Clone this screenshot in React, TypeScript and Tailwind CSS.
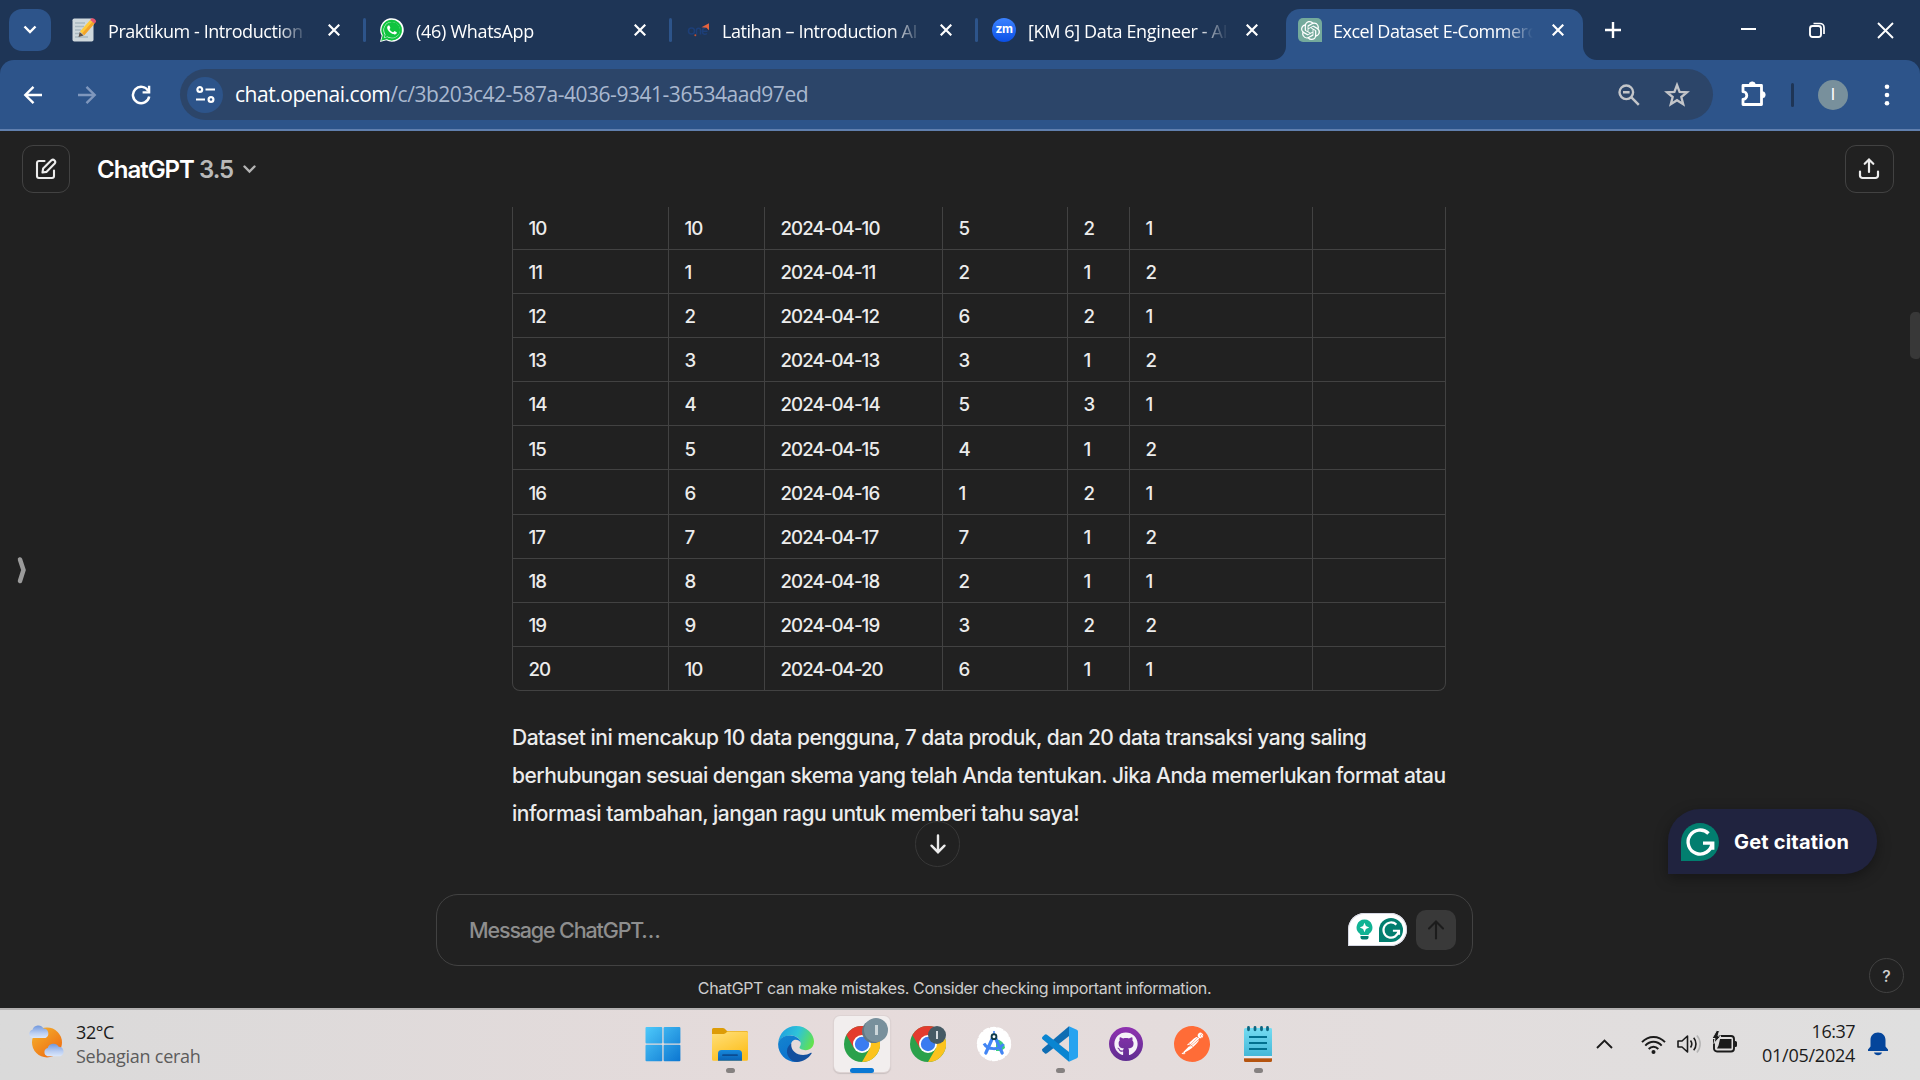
import type { ReactNode } from "react";
import { FaWhatsapp, FaGithub } from "react-icons/fa";
import { SiOpenai, SiPostman } from "react-icons/si";

const tabFont = "font-['Open_Sans','Noto_Sans',sans-serif]";
const chatFont = "font-['Inter','Liberation_Sans',sans-serif]";

/* ---------- small icons ---------- */

function MemoIcon() {
  return (
    <svg width="26" height="24" viewBox="0 0 26 24">
      <rect x="0.5" y="0.5" width="21" height="23" rx="1.8" fill="#cfd8dc" />
      <path d="M3 5h10M3 8.5h9M3 12h6M3 15.5h4M3 19h13" stroke="#a9b8c0" strokeWidth="1.3" />
      <path d="M6.5 19l1.2-5 4 3.4z" fill="#5f5048" />
      <path d="M8 13.4L18.2 1.9l4.3 3.7L12.2 17.2z" fill="#ffca3a" />
      <path d="M10.2 15.3L20.4 3.8l2.1 1.8L12.2 17.2z" fill="#f2a32c" />
      <path d="M18.2 1.9l1.5-1.6c1.7-.8 4.700 1.400 4.300 3.600l-1.500 1.700z" fill="#e5566d" />
    </svg>
  );
}

function WhatsAppIcon() {
  return (
    <span className="relative flex size-6 items-center justify-center">
      <svg width="24" height="24" viewBox="0 0 24 24">
        <path d="M0 24l1.700-6.200A11.800 11.800 0 1 1 6.300 22.300z" fill="#fff" />
        <path d="M2.100 21.900l1.200-4.500a10 10 0 1 1 3.500 3.400z" fill="#10c43f" />
      </svg>
      <FaWhatsapp className="absolute left-[1px] top-[1px] size-[22px] text-white" />
      <svg className="absolute left-0 top-0" width="24" height="24" viewBox="0 0 24 24">
        <path d="M2.600 21.400l1.200-4.500a9.200 9.200 0 1 1 3.300 3.200z" fill="none" stroke="#10c43f" strokeWidth="2" />
      </svg>
    </span>
  );
}

function OneIcon() {
  return (
    <svg width="24" height="24" viewBox="0 0 24 24">
      <g fill="none" stroke="#1d3f78" strokeWidth="1.500">
        <circle cx="5.500" cy="13" r="3" />
        <path d="M10.500 16.500V12c0-2.500 4-2.500 4 0v4.500M16.500 13.200h5M21 15.500c-2 1.500-4.600.8-4.600-2.300 0-2.300 1.600-3.200 3-3.200" />
      </g>
      <path d="M15.500 9.300L23 5.200v7l-2.500-2.500z" fill="#e5623d" />
      <circle cx="9.300" cy="17.200" r="1" fill="#c6502f" />
    </svg>
  );
}

function ZoomIcon() {
  return (
    <span className="flex size-6 items-center justify-center rounded-full bg-linear-to-b from-[#3b82ff] to-[#0a4fe6] pb-[2px] font-['Inter',sans-serif] text-[12px] font-bold leading-none tracking-tight text-white">
      zm
    </span>
  );
}

function GptIcon() {
  return (
    <span className="flex size-6 items-center justify-center rounded-tl-[5px] rounded-tr-[5px] rounded-bl-[5px] bg-[#74aa9c]">
      <SiOpenai className="size-[19px] text-white" />
    </span>
  );
}

function CloseX() {
  return (
    <svg width="12" height="12" viewBox="0 0 12 12">
      <path d="M0.7 0.7l10.6 10.6M11.300 0.700L0.700 11.300" stroke="#fff" strokeWidth="2.200" />
    </svg>
  );
}

function GrammarlyMark({ size }: { size: number }) {
  return (
    <svg width={size} height={size} viewBox="0 0 38 38">
      <path d="M19 0a19 19 0 0 1 0 38H0V19A19 19 0 0 1 19 0z" fill="#027e6f" />
      <path d="M27.500 10.500A12 12 0 1 0 31 20.500" fill="none" stroke="#fff" strokeWidth="3.400" />
      <path d="M22 20.200h9.800v6.500" fill="none" stroke="#fff" strokeWidth="3.200" />
    </svg>
  );
}

/* ---------- browser chrome ---------- */

function TabTitle({ children, className }: { children: ReactNode; className: string }) {
  return (
    <div
      className={`mt-[2px] w-[202px] overflow-hidden whitespace-nowrap text-[18px] leading-[26px] text-white [mask-image:linear-gradient(to_right,black_84%,transparent_99%)] ${tabFont} ${className}`}
    >
      {children}
    </div>
  );
}

function Tab({
  icon,
  title,
  tracking,
  separator,
  first,
}: {
  icon: ReactNode;
  title: string;
  tracking: string;
  separator?: boolean;
  first?: boolean;
}) {
  return (
    <div className="flex h-[60px] w-[306px] shrink-0 items-center">
      <div className={first ? "ml-3 w-[26px]" : "ml-[14px] w-6"}>{icon}</div>
      <TabTitle className={`${first ? "ml-[10px]" : "ml-3"} ${tracking}`}>{title}</TabTitle>
      <div className={`flex w-3 justify-center ${first ? "ml-[18px]" : "ml-[16px]"}`}>
        <CloseX />
      </div>
      <div className="grow" />
      {separator && <div className="h-6 w-[3px] rounded-full bg-[#2d548a]" />}
    </div>
  );
}

function TabStrip() {
  return (
    <div className="flex h-[60px] bg-[#1e3556]">
      <div className="ml-[9px] mt-[9px] flex size-[42px] items-center justify-center rounded-[13px] bg-[#2d548a]">
        <svg width="14" height="10" viewBox="0 0 14 10">
          <path d="M1.500 1.500L7 7l5.500-5.500" fill="none" stroke="#fff" strokeWidth="2.400" />
        </svg>
      </div>
      <div className="w-[9px]" />
      <Tab first separator icon={<MemoIcon />} title="Praktikum - Introduction AI" tracking="tracking-[-0.44px]" />
      <Tab separator icon={<WhatsAppIcon />} title="(46) WhatsApp" tracking="tracking-[-0.3px]" />
      <Tab separator icon={<OneIcon />} title="Latihan – Introduction AI for" tracking="tracking-[-0.44px]" />
      <Tab icon={<ZoomIcon />} title="[KM 6] Data Engineer - AI for" tracking="tracking-[-0.36px]" />
      <div className="relative ml-[2px] flex w-[297px] shrink-0 flex-col pt-[9px]">
        <div className="flex h-[51px] w-[297px] items-center rounded-t-[14px] bg-[#2d548a] pb-[9px]">
          <div className="ml-[12px]">
            <GptIcon />
          </div>
          <TabTitle className="ml-[11px] tracking-[-0.5px]">Excel Dataset E-Commerce</TabTitle>
          <div className="ml-[17px] flex w-3 justify-center">
            <CloseX />
          </div>
        </div>
        <svg className="absolute -left-[14px] bottom-0" width="14" height="14" viewBox="0 0 14 14">
          <path d="M14 0v14H0A14 14 0 0 0 14 0z" fill="#2d548a" />
        </svg>
        <svg className="absolute -right-[14px] bottom-0" width="14" height="14" viewBox="0 0 14 14">
          <path d="M0 0v14h14A14 14 0 0 1 0 0z" fill="#2d548a" />
        </svg>
      </div>
      <div className="flex grow items-center">
        <svg className="ml-[22px]" width="16" height="16" viewBox="0 0 16 16">
          <path d="M8 0v16M0 8h16" stroke="#fff" strokeWidth="2.400" />
        </svg>
        <svg className="ml-[120px]" width="15" height="16" viewBox="0 0 15 16">
          <path d="M0 7h15" stroke="#fff" strokeWidth="2" />
        </svg>
        <svg className="ml-[53px]" width="16" height="16" viewBox="0 0 16 16">
          <rect x="1" y="4" width="11" height="11" rx="2.500" fill="none" stroke="#fff" strokeWidth="1.900" />
          <path d="M4.500 1.500H11A4 4 0 0 1 15 5.500V12" fill="none" stroke="#fff" strokeWidth="1.700" />
        </svg>
        <svg className="ml-[52px]" width="17" height="17" viewBox="0 0 17 17">
          <path d="M1 1l15 15M16 1L1 16" stroke="#fff" strokeWidth="1.900" />
        </svg>
      </div>
    </div>
  );
}

function Toolbar() {
  return (
    <div className="bg-[#1e3556]">
      <div className="flex h-[71px] items-center rounded-t-[14px] border-b-2 border-[#607fae] bg-[#2d548a]">
        <svg className="ml-[23px]" width="20" height="20" viewBox="0 0 20 20">
          <path d="M19 10H2.500M10.500 1.800L2.300 10l8.200 8.200" fill="none" stroke="#fff" strokeWidth="2.400" />
        </svg>
        <svg className="ml-[34px]" width="20" height="20" viewBox="0 0 20 20">
          <path d="M1 10h16.500M9.500 1.800l8.200 8.200-8.200 8.200" fill="none" stroke="#7f97bd" strokeWidth="2.400" />
        </svg>
        <svg className="ml-[34px]" width="20" height="20" viewBox="0 0 20 20">
          <path d="M17.300 6A8.200 8.200 0 1 0 18.200 11.500" fill="none" stroke="#fff" strokeWidth="2.500" />
          <path d="M19.300 0.800v7.700h-7.700V6.200h5.300V0.800z" fill="#fff" />
        </svg>
        <div className="ml-[29px] flex h-[51px] w-[1533px] items-center rounded-full bg-[#2c4569]">
          <div className="ml-[7px] flex size-9 items-center justify-center rounded-full bg-[#2d548a]">
            <svg width="19" height="17" viewBox="0 0 19 17">
              <g fill="none" stroke="#fff" strokeWidth="2.200">
                <circle cx="3.800" cy="3.500" r="2.400" />
                <path d="M9.500 3.500H19M0 13.500h9" />
                <circle cx="15" cy="13.500" r="2.400" />
              </g>
            </svg>
          </div>
          <div className={`ml-[12px] whitespace-nowrap text-[21px] leading-none tracking-[-0.47px] text-[#a9b8cf] ${tabFont}`}>
            <span className="text-white">chat.openai.com</span>/c/3b203c42-587a-4036-9341-36534aad97ed
          </div>
          <div className="grow" />
          <svg width="22" height="22" viewBox="0 0 22 22">
            <circle cx="8.300" cy="8.300" r="6.800" fill="none" stroke="#c3c5c9" strokeWidth="2.400" />
            <path d="M5 8.300h6.600M13.200 13.200l7.600 7.600" stroke="#c3c5c9" strokeWidth="2.500" />
          </svg>
          <svg className="ml-[24px] mr-[23px]" width="26" height="25" viewBox="0 0 26 25">
            <path
              d="M13 3l2.600 6.800 7.400.5-5.700 4.700 1.900 7.200L13 18.200l-6.200 4 1.900-7.200L3 10.300l7.400-.5z"
              fill="none"
              stroke="#c3c5c9"
              strokeWidth="2.300"
            />
          </svg>
        </div>
        <svg className="mb-[2px] ml-[26px]" width="28" height="28" viewBox="0 0 28 28">
          <path
            d="M4 5.500H22.500V24.500H4V19.300a3.600 3.600 0 0 0 0-7.600z"
            fill="none"
            stroke="#fff"
            strokeWidth="2.800"
            strokeLinejoin="round"
          />
          <path d="M10 5a3.200 3.200 0 0 1 6.400 0zM23 11.500a3.300 3.300 0 0 1 0 6.600z" fill="#fff" stroke="#fff" strokeWidth="0.600" />
        </svg>
        <div className="ml-[24px] h-6 w-[3px] rounded-full bg-[#1e3556]" />
        <div className="ml-[24px] flex size-[30px] items-center justify-center rounded-full bg-[#78909c] font-['Roboto',sans-serif] text-[16px] leading-none text-white">
          I
        </div>
        <svg className="ml-[36px]" width="6" height="22" viewBox="0 0 6 22">
          <g fill="#fff">
            <circle cx="3" cy="2.700" r="2.300" />
            <circle cx="3" cy="11" r="2.300" />
            <circle cx="3" cy="19.300" r="2.300" />
          </g>
        </svg>
      </div>
    </div>
  );
}

/* ---------- chat page ---------- */

const rows: string[][] = [
  ["10", "10", "2024-04-10", "5", "2", "1", ""],
  ["11", "1", "2024-04-11", "2", "1", "2", ""],
  ["12", "2", "2024-04-12", "6", "2", "1", ""],
  ["13", "3", "2024-04-13", "3", "1", "2", ""],
  ["14", "4", "2024-04-14", "5", "3", "1", ""],
  ["15", "5", "2024-04-15", "4", "1", "2", ""],
  ["16", "6", "2024-04-16", "1", "2", "1", ""],
  ["17", "7", "2024-04-17", "7", "1", "2", ""],
  ["18", "8", "2024-04-18", "2", "1", "1", ""],
  ["19", "9", "2024-04-19", "3", "2", "2", ""],
  ["20", "10", "2024-04-20", "6", "1", "1", ""],
];

function DataTable() {
  return (
    <div className="w-[934px] overflow-hidden rounded-b-[8px] border-b border-l border-r border-[#424242]">
      {rows.map((row, r) => (
        <div
          key={row[0]}
          className={`grid grid-cols-[156px_96px_178px_125px_62px_183px_1fr] ${
            r === 0 ? "h-[42px]" : "h-[44.1px] border-t border-[#424242]"
          }`}
        >
          {row.map((cell, c) => (
            <div
              key={c}
              className={`flex items-center pl-[15.500px] text-[18.700px] font-medium leading-none tracking-[-0.950px] text-[#ececec] ${
                r === 0 ? "pt-[2px]" : "pt-[4px]"
              } ${c < 6 ? "border-r border-[#424242]" : ""}`}
            >
              {cell}
            </div>
          ))}
        </div>
      ))}
    </div>
  );
}

function ChatHeader() {
  return (
    <div className="flex h-[76px] shrink-0 items-center pb-px pl-[22px] pr-[26px]">
      <div className="flex size-[48px] items-center justify-center rounded-[11px] border border-[#424242]">
        <svg width="24" height="24" viewBox="0 0 24 24" fill="none" stroke="#ececec" strokeWidth="2.100">
          <path d="M10.500 4H5A2 2 0 0 0 3 6v13a2 2 0 0 0 2 2h13a2 2 0 0 0 2-2v-5.500" strokeLinecap="round" />
          <path d="M8.500 15.500l.6-3.900 8.300-8.300a2.350 2.350 0 0 1 3.300 3.300l-8.300 8.300z" strokeLinejoin="round" />
        </svg>
      </div>
      <div className="ml-[27px] flex items-center pt-[3px] text-[24px] font-semibold leading-none tracking-[-1px] text-white">
        <span>ChatGPT</span>
        <span className="ml-[5px] text-[#b9b9b9]">3.5</span>
      </div>
      <svg className="ml-[10px] mt-px" width="13" height="9" viewBox="0 0 13 9">
        <path d="M1.500 1.500l5 5 5-5" fill="none" stroke="#b4b4b4" strokeWidth="2.400" strokeLinecap="round" />
      </svg>
      <div className="grow" />
      <div className="flex h-[48px] w-[49px] items-center justify-center rounded-[11px] border border-[#424242] pr-px">
        <svg width="22" height="24" viewBox="0 0 22 24" fill="none" stroke="#ececec" strokeWidth="2.200" strokeLinecap="round">
          <path d="M11 15V3M6.700 6.800L11 2.500l4.300 4.300" />
          <path d="M2 14.500v4a2.500 2.500 0 0 0 2.500 2.500h13a2.500 2.500 0 0 0 2.500-2.500v-4" />
        </svg>
      </div>
    </div>
  );
}

function Composer() {
  return (
    <div className="ml-[436px] flex h-[72px] w-[1037px] shrink-0 items-center rounded-[22px] border border-[#424242] pb-px">
      <div className="ml-[32px] pt-[3px] text-[21.500px] font-medium leading-none tracking-[-1.150px] text-[#8e8e8e]">Message ChatGPT…</div>
      <div className="grow" />
      <div className="flex h-[33px] w-[59px] items-center rounded-t-full rounded-br-full bg-white pl-[8px] shadow-[inset_0_0_0_1px_#d5d7e2]">
        <svg width="17" height="21" viewBox="0 0 17 21">
          <path d="M8.500 0.500a7.900 7.900 0 0 1 4.600 14.300L12.500 16h-8l-.6-1.200A7.900 7.900 0 0 1 8.500.5z" fill="#11b394" />
          <path d="M4.500 17h8v1.500a2 2 0 0 1-2 2h-4a2 2 0 0 1-2-2z" fill="#027e6f" />
          <path d="M8.500 3.800l1.400 3.300 3.300 1.400-3.300 1.400-1.400 3.300-1.400-3.300-3.300-1.400 3.300-1.400z" fill="#fff" />
        </svg>
        <div className="ml-[6px]">
          <GrammarlyMark size={24} />
        </div>
      </div>
      <div className="ml-[9px] mr-[16px] flex size-10 items-center justify-center rounded-[10px] bg-[#393939]">
        <svg width="18" height="20" viewBox="0 0 18 20" fill="none" stroke="#1c1c1c" strokeWidth="2.100" strokeLinecap="round">
          <path d="M9 18.500V2M2 8.500l7-7 7 7" />
        </svg>
      </div>
    </div>
  );
}

function ChatPage() {
  return (
    <div className={`relative flex h-[877px] flex-col overflow-hidden bg-[#212121] ${chatFont}`}>
      <ChatHeader />
      <div className="ml-[512px] flex h-[687px] shrink-0 flex-col">
        <DataTable />
        <div className="mt-[28px] whitespace-nowrap text-[21px] font-medium leading-[37.800px] text-[#ececec]">
          <p className="tracking-[-0.513px]">Dataset ini mencakup 10 data pengguna, 7 data produk, dan 20 data transaksi yang saling</p>
          <p className="tracking-[-0.528px]">berhubungan sesuai dengan skema yang telah Anda tentukan. Jika Anda memerlukan format atau</p>
          <p className="tracking-[-0.500px]">informasi tambahan, jangan ragu untuk memberi tahu saya!</p>
        </div>
      </div>
      <Composer />
      <div className="mt-[13px] w-[1909px] text-center text-[16px] leading-[18px] tracking-[-0.390px] text-[#cdcdcd]">
        ChatGPT can make mistakes. Consider checking important information.
      </div>

      <div className="absolute left-[915px] top-[690px] flex h-[46px] w-[45px] items-center justify-center rounded-full border border-[#383838] bg-[#212121]">
        <svg width="18" height="20" viewBox="0 0 18 20" fill="none" stroke="#ececec" strokeWidth="2.400" strokeLinecap="round">
          <path d="M9 1.500V18M2.500 11.700L9 18.200l6.500-6.500" />
        </svg>
      </div>
      <svg className="absolute left-[16px] top-[425px]" width="12" height="28" viewBox="0 0 12 28">
        <path d="M4 3.500L7.500 14 4 25" fill="none" stroke="#9b9b9b" strokeWidth="4.500" strokeLinecap="round" />
      </svg>
      <div className="absolute right-0 top-[181px] h-[47px] w-[10px] rounded-l-[5px] rounded-r-[3px] bg-[#383838]" />
      <div className="absolute left-[1668px] top-[678px] flex h-[65px] w-[209px] items-center rounded-t-[32px] rounded-br-[32px] bg-[#20233f] pl-[13px] shadow-[0_4px_14px_rgba(0,0,0,0.350)]">
        <GrammarlyMark size={38} />
        <span className="ml-[15px] whitespace-nowrap text-[20px] font-bold leading-none tracking-[0.200px] text-white">Get citation</span>
      </div>
      <div className="absolute left-[1869px] top-[827px] flex size-[35px] items-center justify-center rounded-full border border-[#424242] text-[16px] font-medium leading-none text-[#d0d0d0]">
        ?
      </div>
    </div>
  );
}

/* ---------- taskbar ---------- */

function WeatherIcon() {
  return (
    <svg width="38" height="36" viewBox="0 0 38 36">
      <defs>
        <linearGradient id="sun" x1="0" y1="0" x2="0.800" y2="1">
          <stop offset="0" stopColor="#f5b62e" />
          <stop offset="1" stopColor="#ee6a12" />
        </linearGradient>
        <linearGradient id="cloud" x1="0" y1="0" x2="0" y2="1">
          <stop offset="0" stopColor="#6f97dd" />
          <stop offset="0.600" stopColor="#b9cdf2" />
          <stop offset="1" stopColor="#dbe7fa" />
        </linearGradient>
      </defs>
      <circle cx="19" cy="17.500" r="15" fill="url(#sun)" />
      <path d="M4.500 13a4.300 4.300 0 0 1 0-8.300A6 6 0 0 1 15.500 3.500a5 5 0 0 1 2 9.500z" fill="url(#cloud)" />
      <path d="M19.500 31.300a4.300 4.300 0 0 1 .2-8.300 6 6 0 0 1 11-1.300 5 5 0 0 1 1.800 9.600z" fill="url(#cloud)" />
    </svg>
  );
}

function WindowsIcon() {
  return (
    <svg className="mr-[3px]" width="36" height="36" viewBox="0 0 36 36">
      <defs>
        <linearGradient id="win" x1="0" y1="0" x2="1" y2="1" gradientUnits="objectBoundingBox">
          <stop offset="0" stopColor="#4fcbfb" />
          <stop offset="1" stopColor="#0a74d0" />
        </linearGradient>
        <mask id="winmask">
          <rect x="0.500" y="1" width="16.800" height="16.500" rx="1" fill="#fff" />
          <rect x="18.600" y="1" width="16.800" height="16.500" rx="1" fill="#fff" />
          <rect x="0.500" y="18.800" width="16.800" height="16.500" rx="1" fill="#fff" />
          <rect x="18.600" y="18.800" width="16.800" height="16.500" rx="1" fill="#fff" />
        </mask>
      </defs>
      <rect width="36" height="36" fill="url(#win)" mask="url(#winmask)" />
    </svg>
  );
}

function FolderIcon() {
  return (
    <svg width="36" height="36" viewBox="0 0 36 36">
      <defs>
        <linearGradient id="fold" x1="0" y1="0" x2="0.500" y2="1">
          <stop offset="0" stopColor="#ffe07a" />
          <stop offset="1" stopColor="#fdbf1f" />
        </linearGradient>
        <linearGradient id="foldb" x1="0" y1="0" x2="0" y2="1">
          <stop offset="0" stopColor="#1689dc" />
          <stop offset="1" stopColor="#0a62b5" />
        </linearGradient>
      </defs>
      <path d="M0 3.500A1.500 1.500 0 0 1 1.500 2h9.300c.8 0 1.500.3 2 .8L15 5h19.500A1.500 1.500 0 0 1 36 6.500V15H0z" fill="#dd9c07" />
      <path d="M0 8h11.500c.8 0 1.400-.2 2-.8L15.500 5.500H34.500A1.500 1.500 0 0 1 36 7v26.300A1.500 1.500 0 0 1 34.500 34.800h-33A1.500 1.500 0 0 1 0 33.300z" fill="url(#fold)" />
      <path d="M6 34.800V27.500A3.500 3.500 0 0 1 9.500 24h17A3.500 3.500 0 0 1 30 27.500v7.300z" fill="url(#foldb)" />
      <path d="M11 29.200h14" stroke="#0b4c92" strokeWidth="1.800" strokeLinecap="round" />
    </svg>
  );
}

function EdgeIcon() {
  return (
    <svg width="36" height="36" viewBox="0 0 36 36">
      <defs>
        <linearGradient id="e1" x1="0" y1="0.300" x2="1" y2="0.600">
          <stop offset="0" stopColor="#1f9fe0" />
          <stop offset="0.500" stopColor="#2fc4d8" />
          <stop offset="1" stopColor="#63e24d" />
        </linearGradient>
        <linearGradient id="e2" x1="0" y1="0" x2="0.600" y2="1">
          <stop offset="0" stopColor="#1585cf" />
          <stop offset="1" stopColor="#0a6fce" />
        </linearGradient>
      </defs>
      <path d="M0.200 17C1 7 8.500 0 18 0c10.500 0 18 8 18 15.500 0 5-3.500 8.700-8.500 8.700-3.600 0-6-1.400-6-2.600 0-1 1.300-1.500 1.300-4 0-4.500-4.200-8.200-9.800-8.200C6.500 9.400 1.500 12.500.2 17z" fill="url(#e1)" />
      <path d="M0.100 18C0.600 12.500 6 9.400 12 9.400c5.800 0 10.300 3.300 10.800 7.400-1-2-3-3-5-3-3 0-5 2.700-5 6.200 0 8 7 13.800 13 13.300A18 18 0 0 1 18 36C8 36 0 28 .1 18z" fill="url(#e2)" />
      <path d="M13.300 17.500c-1.200 9.500 10.700 14.800 19.600 9.300.6-.3 1 .2.700.8C30.500 32.600 25 36 19 36 11.500 35 8.500 29 9 24.500c.2-3 2-5.500 4.300-7z" fill="#124f9e" />
    </svg>
  );
}

function ChromeIcon() {
  return (
    <svg width="36" height="36" viewBox="0 0 36 36">
      <circle cx="18" cy="18" r="18" fill="#2aa14b" />
      <path d="M18 9H33.590A18 18 0 0 1 18 36L25.800 22.500z" fill="#fcc31e" />
      <path d="M33.590 9A18 18 0 0 0 2.410 9L10.200 22.500 18 9z" fill="#e33b2e" />
      <circle cx="18" cy="18" r="9" fill="#fff" />
      <circle cx="18" cy="18" r="7.200" fill="#3a7cf0" />
    </svg>
  );
}

function AndroidStudioIcon() {
  return (
    <svg width="36" height="36" viewBox="0 0 36 36">
      <circle cx="18" cy="18" r="16.600" fill="#fff" />
      <circle cx="18" cy="18" r="16.300" fill="none" stroke="#fff" strokeWidth="1.800" strokeDasharray="5 2.300" strokeLinecap="round" />
      <path d="M20 13.500a9 9 0 0 1 9 8.500l-4 3h-5z" fill="#3ad07f" />
      <path d="M17.200 5h1.600v4h-1.600z" fill="#4285f4" />
      <path d="M16.300 12.500L9.800 27M19.700 12.500L26.200 27" stroke="#4285f4" strokeWidth="3.200" strokeLinecap="round" />
      <path d="M8 17.500c3.500 6.500 15 7 19.500.5" fill="none" stroke="#4285f4" strokeWidth="3" />
      <circle cx="18" cy="10.700" r="2.400" fill="#fff" stroke="#0f3b4a" strokeWidth="1.900" />
    </svg>
  );
}

function VsCodeIcon() {
  return (
    <svg width="36" height="36" viewBox="0 0 36 36">
      <path d="M27 .3L27 10 5 27.300a1.800 1.800 0 0 1-2.300-.1L.6 25.200a1.800 1.800 0 0 1 0-2.500z" fill="#0f6db3" />
      <path d="M27 35.700V26L5 8.700a1.800 1.800 0 0 0-2.300.1L.6 10.800a1.800 1.800 0 0 0 0 2.500z" fill="#0a85d1" />
      <path d="M27 0.200l7.800 3.600A2 2 0 0 1 36 5.600v24.800a2 2 0 0 1-1.200 1.800L27 35.800z" fill="#27a3f0" />
    </svg>
  );
}

function GithubIcon() {
  return (
    <span className="flex size-[34px] items-center justify-center rounded-full bg-linear-to-b from-[#8f31b0] to-[#5f2d91]">
      <FaGithub className="size-6 text-[#f5f2f8]" />
    </span>
  );
}

function PostmanIcon() {
  return (
    <span className="relative flex size-9 items-center justify-center">
      <span className="absolute size-[34px] rounded-full bg-white" />
      <SiPostman className="relative size-9 text-[#ff6c37]" />
    </span>
  );
}

function NotepadIcon() {
  return (
    <svg width="28" height="36" viewBox="0 0 28 36">
      <defs>
        <linearGradient id="note" x1="0" y1="0" x2="0" y2="1">
          <stop offset="0" stopColor="#74dcf2" />
          <stop offset="1" stopColor="#45b8d8" />
        </linearGradient>
      </defs>
      <path d="M0 30h28v4.500A1.500 1.500 0 0 1 26.500 36h-25A1.500 1.500 0 0 1 0 34.500z" fill="#b5540f" />
      <rect y="29" width="28" height="3.300" fill="#ececf0" />
      <path d="M0 3.500A1.500 1.500 0 0 1 1.500 2h25A1.500 1.500 0 0 1 28 3.500V30H0z" fill="url(#note)" />
      <path d="M5 11h18M5 17h18M5 23h18" stroke="#02708f" strokeWidth="2" />
      <path d="M4.500 1.500v2.300M11 1.500v2.300M17.500 1.500v2.300M23.500 1.500v2.300" stroke="#0e6680" strokeWidth="2.800" strokeLinecap="round" />
    </svg>
  );
}

function TaskItem({ children, state }: { children: ReactNode; state?: "running" | "active" }) {
  return (
    <div
      className={`relative flex size-14 shrink-0 items-center justify-center rounded-[6px] ${
        state === "active" ? "bg-[#f2eeee] shadow-[0_0_0_1px_#ddd3d3,0_1px_1px_1px_#c9c0c0]" : ""
      }`}
    >
      {children}
      {state === "running" && <span className="absolute bottom-[-1px] h-[5px] w-[9px] rounded-full bg-[#858180]" />}
      {state === "active" && <span className="absolute bottom-[-1px] h-[5px] w-6 rounded-full bg-[#0a78d4]" />}
    </div>
  );
}

function Taskbar() {
  return (
    <div
      className={`flex h-[72px] shrink-0 items-center border-t-2 border-[#b3b1b1] bg-linear-to-r from-[#dadada] from-0% via-[#e6dbdb] via-45% to-[#dfdfdf] to-100% text-[18px] leading-6 ${tabFont}`}
    >
      <div className="ml-[28px] pb-[4px]">
        <WeatherIcon />
      </div>
      <div className="ml-[10px] w-[560px] pb-[3px]">
        <div className="tracking-[-0.400px] text-[#1b1b1b]">32°C</div>
        <div className="tracking-[-0.250px] text-[#5c5c5c]">Sebagian cerah</div>
      </div>
      <div className="flex gap-[10px] pb-[2px]">
        <TaskItem>
          <WindowsIcon />
        </TaskItem>
        <TaskItem state="running">
          <FolderIcon />
        </TaskItem>
        <TaskItem>
          <EdgeIcon />
        </TaskItem>
        <TaskItem state="active">
          <ChromeIcon />
          <span className="absolute left-[28px] top-[4px] size-[23px] rounded-full bg-[#627884]" />
          <span className="absolute left-[30px] top-[2px] flex size-[24px] items-center justify-center rounded-full bg-[#78909c]">
            <span className="h-[10px] w-[3px] bg-[#ccd6da]" />
          </span>
        </TaskItem>
        <TaskItem>
          <ChromeIcon />
          <span className="absolute left-[28px] top-[10px] flex size-[18px] items-center justify-center rounded-full bg-[#455a64]">
            <span className="h-[8px] w-[2px] bg-[#d5dbde]" />
          </span>
        </TaskItem>
        <TaskItem>
          <AndroidStudioIcon />
        </TaskItem>
        <TaskItem state="running">
          <VsCodeIcon />
        </TaskItem>
        <TaskItem>
          <GithubIcon />
        </TaskItem>
        <TaskItem>
          <PostmanIcon />
        </TaskItem>
        <TaskItem state="running">
          <NotepadIcon />
        </TaskItem>
      </div>
      <div className="grow" />
      <div className="flex items-center pb-[2px]">
        <svg width="17" height="10" viewBox="0 0 17 10">
          <path d="M1 9l7.500-7.500L16 9" fill="none" stroke="#1b1b1b" strokeWidth="1.900" />
        </svg>
        <svg className="ml-[28px]" width="25" height="21" viewBox="0 0 25 21" fill="none" stroke="#1b1b1b" strokeWidth="1.900">
          <path d="M1 8.200C7.300 1.200 17.700 1.200 24 8.200" />
          <path d="M4.300 11.700c4.700-5.200 11.700-5.200 16.400 0" />
          <path d="M7.700 15c2.800-3.100 6.800-3.100 9.600 0" />
          <circle cx="12.500" cy="18" r="2" fill="#1b1b1b" stroke="none" />
        </svg>
        <svg className="ml-[11px]" width="25" height="20" viewBox="0 0 25 20" fill="none" stroke="#1b1b1b" strokeWidth="1.600">
          <path d="M1 7v6h4l5.500 5V2L5 7z" strokeLinejoin="round" />
          <path d="M13.500 6.500c1.500 2 1.500 5 0 7M16.700 3.800c3 3.600 3 8.800 0 12.400" />
          <path d="M19.900 1.500c4.300 5 4.300 12 0 17" stroke="#b5b5b5" />
        </svg>
        <svg className="mb-[4px] ml-[10px]" width="26" height="24" viewBox="0 0 26 24">
          <rect x="2" y="6" width="20" height="15.500" rx="3" fill="none" stroke="#1b1b1b" strokeWidth="1.900" />
          <path d="M8 9h11.500v9.500H5l1.500-3z" fill="#1b1b1b" />
          <path d="M22.500 11h1a1.500 1.500 0 0 1 1.500 1.500v3a1.500 1.500 0 0 1-1.500 1.500h-1z" fill="#1b1b1b" />
          <path d="M4.500 0.500L0 8.500h3L2 13.500l7-7.500H6l1.500-5.500z" fill="#1b1b1b" stroke="#e0e0e0" strokeWidth="1" />
        </svg>
        <div className="ml-[24px] w-[93px] pb-[2px] text-right text-[#1b1b1b]">
          <div className="tracking-[-0.500px]">16:37</div>
          <div className="whitespace-nowrap tracking-[-0.250px]">01/05/2024</div>
        </div>
        <svg className="ml-[13px] mr-[32px]" width="20" height="24" viewBox="0 0 20 24">
          <path d="M10 0.500c4.500 0 7.500 3.200 7.500 7.500v6.500L20 17.500V19H0v-1.500l2.500-3V8C2.500 3.700 5.500.5 10 .5z" fill="#04459b" />
          <path d="M6 20.500h8c-.6 1.800-2 2.800-4 2.800s-3.400-1-4-2.800z" fill="#04459b" />
        </svg>
      </div>
    </div>
  );
}

export default function App() {
  return (
    <div className="flex h-[1080px] w-[1920px] flex-col overflow-hidden bg-[#212121]">
      <TabStrip />
      <Toolbar />
      <ChatPage />
      <Taskbar />
    </div>
  );
}
